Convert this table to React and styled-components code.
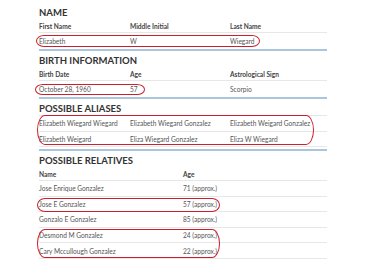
import React from "react";
import styled, { createGlobalStyle } from "styled-components";

const GlobalStyle = createGlobalStyle`
  *, *::before, *::after {
    box-sizing: border-box;
  }
  body {
    margin: 0;
    background: #ffffff;
    font-family: Lato, "Open Sans", sans-serif;
  }
`;

const Page = styled.div`
  width: 327px;
  padding-left: 39px;
`;

const Section = styled.section`
  padding-top: ${(props) => props.top || 4}px;
  padding-bottom: ${(props) => props.bottom || 0}px;
  border-bottom: ${(props) => (props.last ? "none" : "2px solid #a9c6dd")};
`;

const Heading = styled.h2`
  margin: 0;
  height: 12px;
  font-size: 9.5px;
  font-weight: 700;
  line-height: 12px;
  color: #333;
`;

const Table = styled.div`
  position: relative;
`;

const Row = styled.div`
  position: relative;
  display: grid;
  grid-template-columns: ${(props) => props.cols || "91px 100px 1fr"};
  align-items: center;
  height: ${(props) => props.h || 16}px;
  font-size: 6.6px;
  color: #555;
  border-top: ${(props) => (props.lined ? "1px solid #e7e7e7" : "none")};
  border-bottom: ${(props) => (props.underline ? "1px solid #e7e7e7" : "none")};
`;

const Label = styled.span`
  font-weight: 700;
  color: #444;
  white-space: nowrap;
`;

const Value = styled.span`
  white-space: nowrap;
`;

const Ring = styled.div`
  position: absolute;
  left: ${(props) => props.left}px;
  top: ${(props) => props.top}px;
  width: ${(props) => props.width}px;
  height: ${(props) => props.height}px;
  border: 1.3px solid #cc1f2b;
  border-radius: 8px / 50%;
  pointer-events: none;
`;

const relatives = [
  ["Jose Enrique Gonzalez", "71 (approx.)"],
  ["Jose E Gonzalez", "57 (approx.)"],
  ["Gonzalo E Gonzalez", "85 (approx.)"],
  ["Desmond M Gonzalez", "24 (approx.)"],
  ["Cary Mccullough Gonzalez", "22 (approx.)"],
];

const RelCols = "144px 1fr";

export default function App() {
  return (
    <>
      <GlobalStyle />
      <Page>
        <Section top={7}>
          <Heading>NAME</Heading>
          <Row underline h={14}>
            <Label>First Name</Label>
            <Label>Middle Initial</Label>
            <Label>Last Name</Label>
          </Row>
          <Row>
            <Value>Elizabeth</Value>
            <Value>W</Value>
            <Value>Wiegard</Value>
            <Ring left={-3} top={2} width={224} height={12} />
          </Row>
        </Section>

        <Section>
          <Heading>BIRTH INFORMATION</Heading>
          <Row underline h={14}>
            <Label>Birth Date</Label>
            <Label>Age</Label>
            <Label>Astrological Sign</Label>
          </Row>
          <Row>
            <Value>October 28, 1960</Value>
            <Value>57</Value>
            <Value>Scorpio</Value>
            <Ring left={-4} top={2.5} width={110} height={11} />
          </Row>
        </Section>

        <Section bottom={2}>
          <Heading>POSSIBLE ALIASES</Heading>
          <Table>
            <Row lined h={15.5}>
              <Value>Elizabeth Wiegard Wiegard</Value>
              <Value>Elizabeth Wiegard Gonzalez</Value>
              <Value>Elizabeth Weigard Gonzalez</Value>
            </Row>
            <Row lined underline h={16.5}>
              <Value>Elizabeth Weigard</Value>
              <Value>Eliza Wiegard Gonzalez</Value>
              <Value>Eliza W Wiegard</Value>
            </Row>
            <Ring left={-2} top={0} width={277} height={30} />
          </Table>
        </Section>

        <Section last>
          <Heading>POSSIBLE RELATIVES</Heading>
          <Row cols={RelCols} underline h={14}>
            <Label>Name</Label>
            <Label>Age</Label>
          </Row>
          {relatives.map(([name, age], i) => (
            <Row key={name} cols={RelCols} underline h={15.6}>
              <Value>{name}</Value>
              <Value>{age}</Value>
              {i === 1 && <Ring left={-2} top={1.5} width={183} height={14} />}
              {i === 3 && <Ring left={-2} top={1.5} width={183} height={28.5} />}
            </Row>
          ))}
        </Section>
      </Page>
    </>
  );
}
